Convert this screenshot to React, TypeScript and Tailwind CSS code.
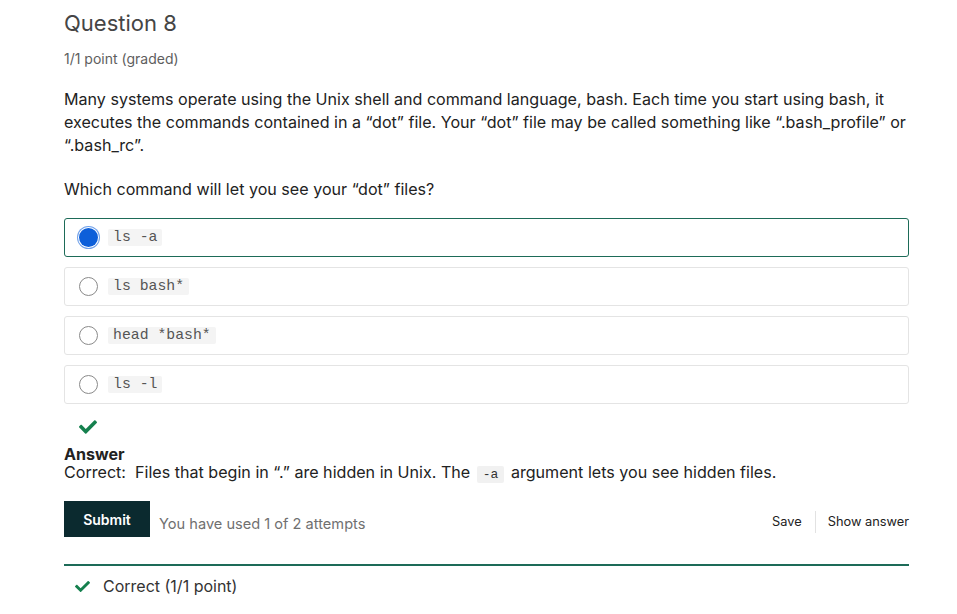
import React from "react";

const Check = ({ className = "" }: { className?: string }) => (
  <svg viewBox="0 0 512 512" className={className} fill="currentColor">
    <path d="M173.898 439.404l-166.4-166.4c-9.997-9.997-9.997-26.206 0-36.204l36.203-36.204c9.997-9.998 26.207-9.998 36.204 0L192 312.69 432.095 72.596c9.997-9.997 26.207-9.997 36.204 0l36.203 36.204c9.997 9.997 9.997 26.206 0 36.204l-294.4 294.401c-9.998 9.997-26.207 9.997-36.204-.001z" />
  </svg>
);

const options = ["ls -a", "ls bash*", "head *bash*", "ls -l"];

export default function App() {
  return (
    <div className="w-[957px] h-[614px] bg-white overflow-hidden" style={{ fontFamily: "Inter, 'Noto Sans', sans-serif" }}>
      <div className="ml-[64px] w-[845px]">
        <h2 className="pt-[9px] text-[22px] leading-[28px] text-[#454545]">Question 8</h2>
        <div className="mt-[13px] text-[14px] leading-[18px] text-[#5e5e5e]">1/1 point (graded)</div>
        <p className="mt-[20px] text-[16.1px] leading-[23px] text-[#222]">
          Many systems operate using the Unix shell and command language, bash. Each time you start using bash, it executes the commands contained in a “dot” file. Your “dot” file may be called something like “.bash_profile” or “.bash_rc”.
        </p>
        <p className="mt-[21px] text-[16.1px] leading-[23px] text-[#222]">Which command will let you see your “dot” files?</p>
        <div className="mt-[17px] flex flex-col gap-[10px]">
          {options.map((o, i) => (
            <div
              key={o}
              className={
                "h-[39px] rounded-[3px] flex items-center pl-[14px] " +
                (i === 0 ? "border border-[#1d6b58]" : "border border-[#e4e4e4]")
              }
            >
              {i === 0 ? (
                <span className="w-[19px] h-[19px] rounded-full bg-[#0d5fd9] ring-1 ring-[#6fa0ea] ring-offset-1 ring-offset-white mr-[10px]" />
              ) : (
                <span className="w-[19px] h-[19px] rounded-full border border-[#8a8a8a] bg-white mr-[10px]" />
              )}
              <code
                className="px-[5px] py-[1px] bg-[#f4f4f4] rounded-[2px] text-[14.8px] leading-[15px] text-[#555]"
                style={{ fontFamily: "'Liberation Mono', monospace" }}
              >
                {o}
              </code>
            </div>
          ))}
        </div>
        <div className="mt-[14px] pl-[15px] text-[#15804e]">
          <Check className="w-[18px] h-[18px]" />
        </div>
        <div className="mt-[10px] text-[16.1px] leading-[17px] font-bold text-[#222]">Answer</div>
        <div className="text-[16.1px] leading-[18px] text-[#222]">
          Correct:&nbsp; Files that begin in “.” are hidden in Unix. The{" "}
          <code
            className="mx-[2px] px-[6px] py-[1px] bg-[#f1f1f1] rounded-[2px] text-[13px] text-[#333]"
            style={{ fontFamily: "'Liberation Mono', monospace" }}
          >
            -a
          </code>{" "}
          argument lets you see hidden files.
        </div>
        <div className="mt-[17px] flex items-center">
          <button className="w-[86px] h-[36px] bg-[#0b2a2f] text-white text-[14px] font-semibold">Submit</button>
          <span className="ml-[9px] mt-[11px] text-[14.6px] text-[#707070]">You have used 1 of 2 attempts</span>
          <div className="ml-auto mt-[6px] flex items-center text-[12.8px] text-[#222]">
            <span className="pr-[13px]">Save</span>
            <span className="w-px h-[22px] bg-[#e2e2e2]" />
            <span className="pl-[12px]">Show answer</span>
          </div>
        </div>
        <div className="mt-[27px] border-t-2 border-[#1d6b58]" />
        <div className="mt-[8px] flex items-center pl-[11px] text-[16px] text-[#333]">
          <Check className="w-[15px] h-[15px] text-[#15804e]" />
          <span className="ml-[13px]">Correct (1/1 point)</span>
        </div>
      </div>
    </div>
  );
}
